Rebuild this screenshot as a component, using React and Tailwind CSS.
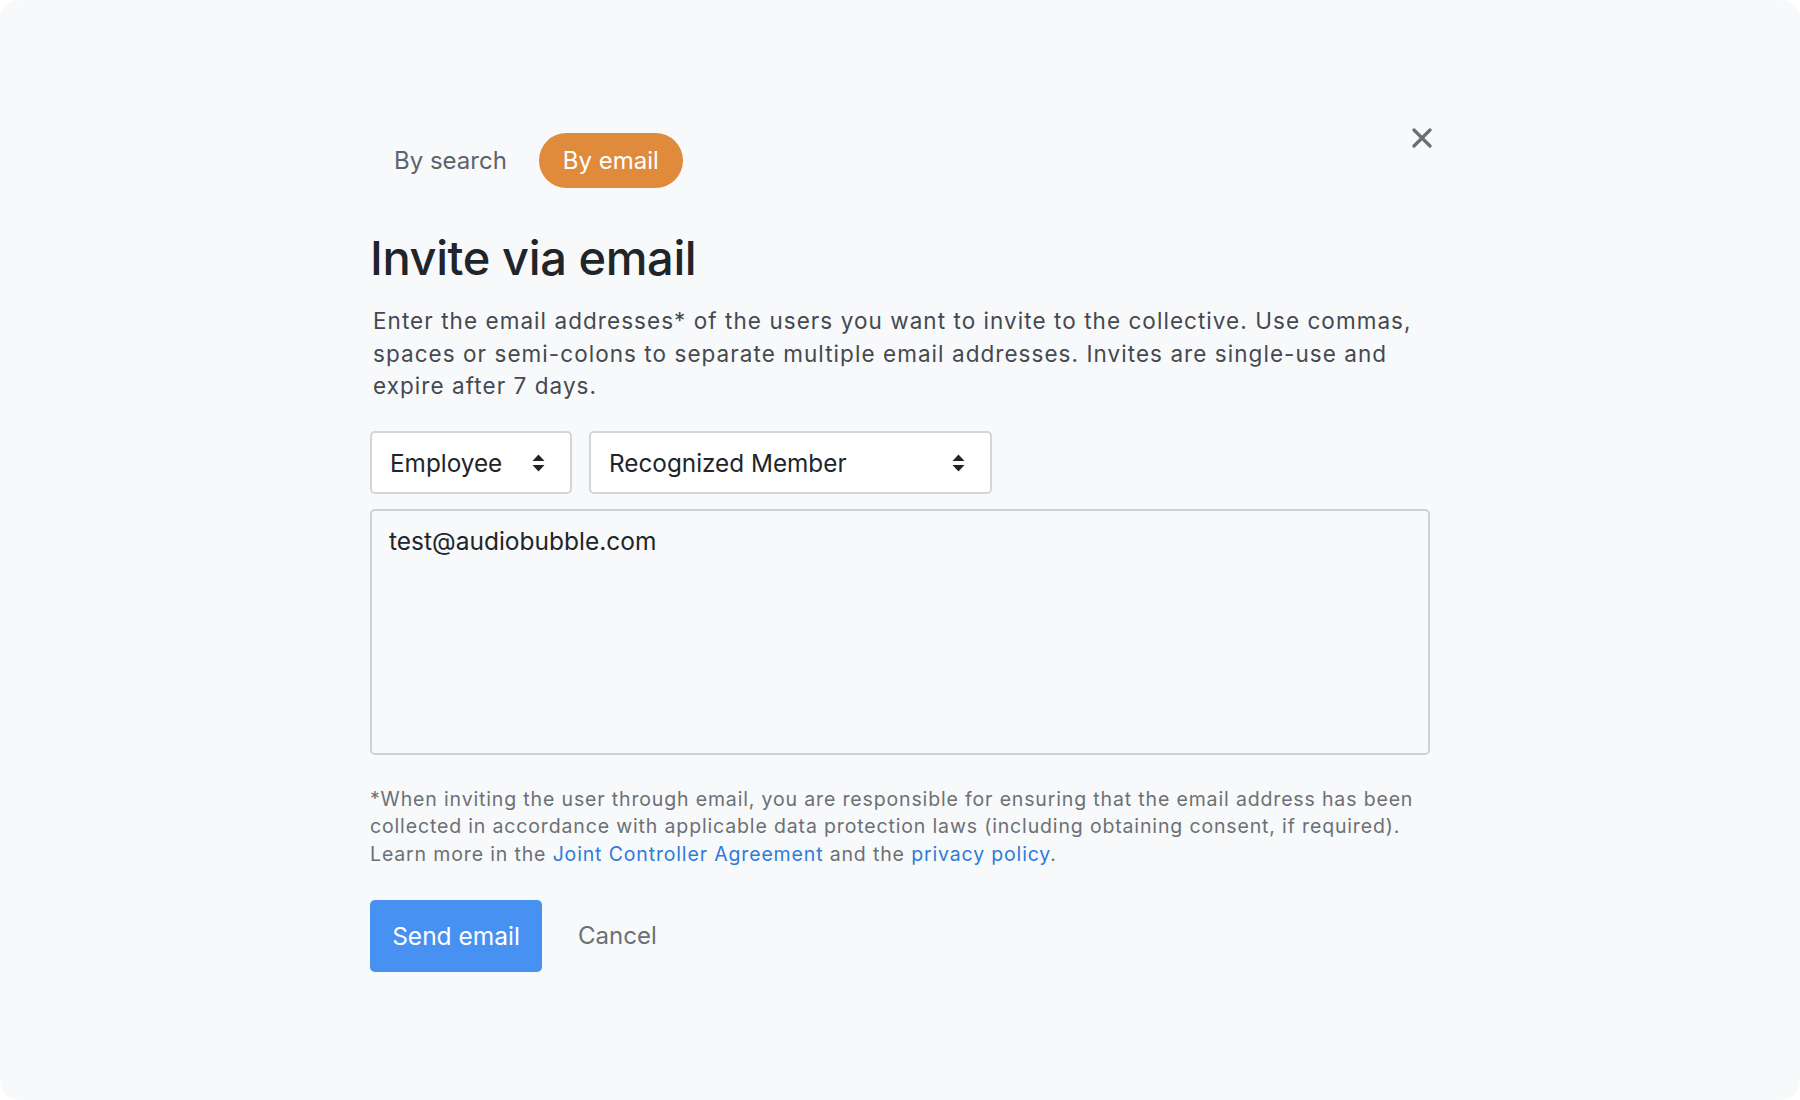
import React from "react";

function SortIcon() {
  return (
    <svg width="13" height="18" viewBox="0 0 13 18" className="shrink-0">
      <path d="M6.5 0.5 L12.5 7 L0.5 7 Z" fill="#212529" />
      <path d="M0.5 11 L12.5 11 L6.5 17.5 Z" fill="#212529" />
    </svg>
  );
}

export default function App() {
  return (
    <div className="min-h-screen bg-white" style={{ fontFamily: "Inter, 'Noto Sans', sans-serif" }}>
      <div className="h-[1100px] w-[1800px] rounded-[20px] bg-[#f8f9fa]">
        <div className="ml-[370px] w-[1062px] pt-[133px]">
          <div className="flex items-start justify-between">
            <div className="flex items-center gap-2">
              <button className="h-[55px] rounded-full px-6 text-[24px] text-[#5f6368]">By search</button>
              <button className="h-[55px] rounded-full bg-[#e08a3c] px-6 text-[24px] text-white">By email</button>
            </div>
            <svg width="20" height="20" viewBox="0 0 20 20" className="mt-[-5px]">
              <path d="M2 2 L18 18 M18 2 L2 18" stroke="#6b6f75" strokeWidth="3.2" strokeLinecap="round" />
            </svg>
          </div>

          <h1 className="mt-[42px] text-[47px] font-medium leading-[56px] tracking-[-0.4px] text-[#212529]">Invite via email</h1>

          <p className="mt-[19px] w-[1060px] pl-[3px] text-[22.5px] leading-[32.5px] tracking-[1.05px] text-[#45494f]">
            Enter the email addresses* of the users you want to invite to the collective. Use commas, spaces or semi-colons to separate multiple email addresses. Invites are single-use and expire after 7 days.
          </p>

          <div className="mt-[28px] flex gap-[17px]">
            <div className="flex h-[63px] w-[202px] items-center justify-between rounded-[5px] border-2 border-[#d3d5d8] bg-white pl-[18px] pr-[25px] pt-[2px] text-[24.3px] text-[#212529]">
              <span>Employee</span>
              <SortIcon />
            </div>
            <div className="flex h-[63px] w-[403px] items-center justify-between rounded-[5px] border-2 border-[#d3d5d8] bg-white pl-[18px] pr-[25px] pt-[2px] text-[24.3px] text-[#212529]">
              <span>Recognized Member</span>
              <SortIcon />
            </div>
          </div>

          <div className="mt-[15px] h-[246px] w-[1060px] rounded-[5px] border-2 border-[#cfd1d4] bg-[#f8f9fa] px-[17px] pt-[12px] text-[24.5px] leading-[36px] text-[#212529]">
            test@audiobubble.com
          </div>

          <p className="mt-[31px] w-[1066px] text-[19.5px] leading-[27.5px] tracking-[0.85px] text-[#6c7075]">
            *When inviting the user through email, you are responsible for ensuring that the email address has been collected in accordance with applicable data protection laws (including obtaining consent, if required). Learn more in the <a className="text-[#2f7bd9]">Joint Controller Agreement</a> and the <a className="text-[#2f7bd9]">privacy policy</a>.
          </p>

          <div className="mt-[32px] flex items-center gap-[36px]">
            <button className="h-[72px] w-[172px] rounded-[5px] bg-[#4791f2] text-[24.5px] text-white">Send email</button>
            <button className="text-[24px] text-[#6c7075]">Cancel</button>
          </div>
        </div>
      </div>
    </div>
  );
}
